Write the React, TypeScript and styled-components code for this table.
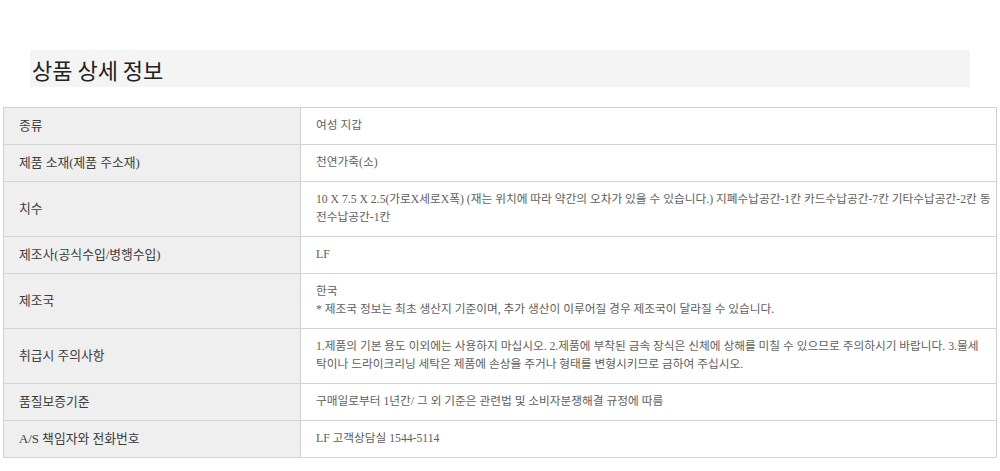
import React from "react";
import styled, { createGlobalStyle } from "styled-components";

const Global = createGlobalStyle`
  html, body { margin: 0; padding: 0; background: #fff; }
  body { font-family: "Liberation Serif", "Noto Sans CJK KR", serif; }
`;

const Page = styled.div`
  padding-top: 50px;
  display: flex;
  flex-direction: column;
  gap: 20px;
`;

const TitleBar = styled.div`
  margin: 0 30px;
  height: 37px;
  background: #f4f4f4;
  display: flex;
  align-items: center;
`;

const Title = styled.h2`
  margin: 0;
  padding-left: 2px;
  font-family: "Noto Sans CJK KR", "Noto Sans", sans-serif;
  font-size: 22px;
  font-weight: 400;
  color: #222;
`;

const Table = styled.table`
  margin: 0 3px;
  width: 994px;
  border-collapse: collapse;
  border: 1px solid #d0d0d0;
`;

const Row = styled.tr`
  border-bottom: 1px solid #d4d4d4;
`;

const Label = styled.th`
  width: 297px;
  box-sizing: border-box;
  background: #efefef;
  border-right: 1px solid #d0d0d0;
  padding: 9px 0 9px 15px;
  text-align: left;
  vertical-align: middle;
  font-size: 12.8px;
  font-weight: 400;
  line-height: 18px;
  color: #3c3c3c;
`;

const Value = styled.td`
  padding: 9px 0 9px 15px;
  font-size: 11.7px;
  line-height: 18px;
  color: #606060;
  vertical-align: middle;
`;

const Line = styled.span`
  display: block;
  white-space: nowrap;
`;

type Item = { label: string; lines: string[] };

const items: Item[] = [
  { label: "종류", lines: ["여성 지갑"] },
  { label: "제품 소재(제품 주소재)", lines: ["천연가죽(소)"] },
  {
    label: "치수",
    lines: [
      "10 X 7.5 X 2.5(가로X세로X폭) (재는 위치에 따라 약간의 오차가 있을 수 있습니다.) 지폐수납공간-1칸 카드수납공간-7칸 기타수납공간-2칸 동",
      "전수납공간-1칸",
    ],
  },
  { label: "제조사(공식수입/병행수입)", lines: ["LF"] },
  {
    label: "제조국",
    lines: ["한국", "* 제조국 정보는 최초 생산지 기준이며, 추가 생산이 이루어질 경우 제조국이 달라질 수 있습니다."],
  },
  {
    label: "취급시 주의사항",
    lines: [
      "1.제품의 기본 용도 이외에는 사용하지 마십시오. 2.제품에 부착된 금속 장식은 신체에 상해를 미칠 수 있으므로 주의하시기 바랍니다. 3.물세",
      "탁이나 드라이크리닝 세탁은 제품에 손상을 주거나 형태를 변형시키므로 금하여 주십시오.",
    ],
  },
  { label: "품질보증기준", lines: ["구매일로부터 1년간/ 그 외 기준은 관련법 및 소비자분쟁해결 규정에 따름"] },
  { label: "A/S 책임자와 전화번호", lines: ["LF 고객상담실 1544-5114"] },
];

export default function App() {
  return (
    <>
      <Global />
      <Page>
        <TitleBar>
          <Title>상품 상세 정보</Title>
        </TitleBar>
        <Table>
          <tbody>
            {items.map((it) => (
              <Row key={it.label}>
                <Label>{it.label}</Label>
                <Value>
                  {it.lines.map((l, i) => (
                    <Line key={i}>{l}</Line>
                  ))}
                </Value>
              </Row>
            ))}
          </tbody>
        </Table>
      </Page>
    </>
  );
}
